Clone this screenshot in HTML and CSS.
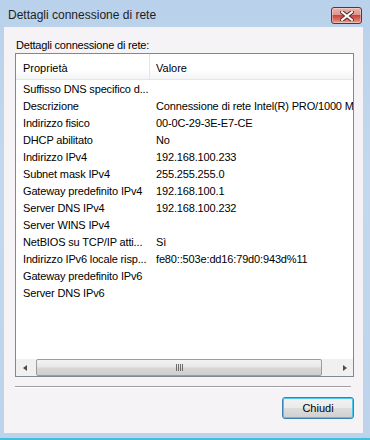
FILE: index.html
```html
<!DOCTYPE html>
<html lang="it">
<head>
    <meta charset="UTF-8">
    <title>Dettagli connessione di rete</title>
    <link rel="stylesheet" href="styles.css">
</head>
<body>
    <div class="window">
        <!-- title bar -->
        <div class="titlebar">
            <span class="title">Dettagli connessione di rete</span>
            <div class="close-btn">
                <svg width="14" height="10" viewBox="0 0 14 10">
                    <path d="M2 1 L12 9 M12 1 L2 9" stroke="#5a2a2a" stroke-width="4" stroke-linecap="square"/>
                    <path d="M2 1 L12 9 M12 1 L2 9" stroke="#ffffff" stroke-width="2" stroke-linecap="square"/>
                </svg>
            </div>
        </div>

        <div class="frame">
            <div class="client">
                <div class="label">Dettagli connessione di rete:</div>

                <div class="listbox">
                    <div class="list-header">
                        <div class="col col-prop">Proprietà</div>
                        <div class="col col-val">Valore</div>
                    </div>
                    <div class="rows">
                        <div class="row"><div class="col col-prop">Suffisso DNS specifico d...</div><div class="col col-val"></div></div>
                        <div class="row"><div class="col col-prop">Descrizione</div><div class="col col-val">Connessione di rete Intel(R) PRO/1000 MT</div></div>
                        <div class="row"><div class="col col-prop">Indirizzo fisico</div><div class="col col-val">00-0C-29-3E-E7-CE</div></div>
                        <div class="row"><div class="col col-prop">DHCP abilitato</div><div class="col col-val">No</div></div>
                        <div class="row"><div class="col col-prop">Indirizzo IPv4</div><div class="col col-val">192.168.100.233</div></div>
                        <div class="row"><div class="col col-prop">Subnet mask IPv4</div><div class="col col-val">255.255.255.0</div></div>
                        <div class="row"><div class="col col-prop">Gateway predefinito IPv4</div><div class="col col-val">192.168.100.1</div></div>
                        <div class="row"><div class="col col-prop">Server DNS IPv4</div><div class="col col-val">192.168.100.232</div></div>
                        <div class="row"><div class="col col-prop">Server WINS IPv4</div><div class="col col-val"></div></div>
                        <div class="row"><div class="col col-prop">NetBIOS su TCP/IP atti...</div><div class="col col-val">Sì</div></div>
                        <div class="row"><div class="col col-prop">Indirizzo IPv6 locale risp...</div><div class="col col-val">fe80::503e:dd16:79d0:943d%11</div></div>
                        <div class="row"><div class="col col-prop">Gateway predefinito IPv6</div><div class="col col-val"></div></div>
                        <div class="row"><div class="col col-prop">Server DNS IPv6</div><div class="col col-val"></div></div>
                    </div>

                    <!-- horizontal scrollbar -->
                    <div class="hscroll">
                        <div class="arrow-btn"><span class="tri tri-left"></span></div>
                        <div class="thumb"><span class="grip"></span></div>
                        <div class="track"></div>
                        <div class="arrow-btn"><span class="tri tri-right"></span></div>
                    </div>
                </div>

                <div class="separator"></div>

                <div class="buttons">
                    <button class="btn-close-dialog">Chiudi</button>
                </div>
            </div>
        </div>
        <div class="bottom-edge"></div>
    </div>
</body>
</html>
```

FILE: styles.css
```css
* {
    box-sizing: border-box;
}

body {
    margin: 0;
    width: 370px;
    height: 440px;
    overflow: hidden;
    font-family: "Liberation Sans", Arial, sans-serif;
    font-size: 11px;
    color: #000;
}

.window {
    width: 370px;
    height: 440px;
    background: linear-gradient(to bottom, #b9d1ea 0%, #c3d8ee 40%, #bcd3eb 100%);
    display: flex;
    flex-direction: column;
}

.titlebar {
    height: 27px;
    display: flex;
    align-items: flex-start;
    justify-content: space-between;
    padding: 0 8px 0 8px;
}

.title {
    font-size: 12px;
    line-height: 14px;
    margin-top: 8px;
    color: #1e1e1e;
}

.close-btn {
    width: 31px;
    height: 17px;
    margin-top: 7px;
    border: 1px solid #6e2c28;
    border-radius: 3px;
    background: linear-gradient(to bottom, #eab3aa 0%, #e0958b 45%, #c9463d 50%, #d86a5e 75%, #e8a096 100%);
    display: flex;
    align-items: center;
    justify-content: center;
    box-shadow: inset 0 0 0 1px rgba(255, 255, 255, 0.35);
}

.frame {
    flex: 1;
    padding: 0 7px 0 4px;
    display: flex;
}

.client {
    flex: 1;
    background-color: #f6f3f7;
    padding: 12px 0 0 11px;
    display: flex;
    flex-direction: column;
}

.label {
    line-height: 13px;
    margin-left: 1px;
    letter-spacing: -0.2px;
}

.listbox {
    margin-top: 1px;
    width: 339px;
    height: 324px;
    border: 1px solid #828790;
    background-color: #fff;
    display: flex;
    flex-direction: column;
    overflow: hidden;
}

.list-header {
    height: 26px;
    display: flex;
    background: linear-gradient(to bottom, #ffffff 0%, #ffffff 60%, #f3f4f6 100%);
    border-bottom: 1px solid #e5e5e5;
    flex-shrink: 0;
}

.list-header .col {
    padding-top: 8px;
    line-height: 13px;
}

.list-header .col-prop {
    border-right: 1px solid #e3e5e8;
}

.col {
    white-space: nowrap;
    overflow: hidden;
}

.col-prop {
    width: 134px;
    padding-left: 7px;
    flex-shrink: 0;
}

.col-val {
    flex: 1;
    padding-left: 6px;
}

.rows {
    flex: 1;
    padding-top: 1px;
    letter-spacing: -0.15px;
}

.row {
    height: 17px;
    line-height: 17px;
    display: flex;
}

.hscroll {
    height: 17px;
    display: flex;
    background-color: #f0f0f0;
    flex-shrink: 0;
}

.arrow-btn {
    width: 17px;
    display: flex;
    align-items: center;
    justify-content: center;
    background-color: #f0f0f0;
}

.tri {
    width: 0;
    height: 0;
    border-top: 3px solid transparent;
    border-bottom: 3px solid transparent;
}

.tri-left {
    border-right: 4px solid #4d4d4d;
}

.tri-right {
    border-left: 4px solid #4d4d4d;
}

.thumb {
    width: 286px;
    margin: 0 0 0 3px;
    border: 1px solid #9c9c9c;
    border-radius: 2px;
    background: linear-gradient(to bottom, #f3f3f3 0%, #e8e8e8 45%, #d6d6d6 55%, #cfcfcf 100%);
    display: flex;
    align-items: center;
    justify-content: center;
}

.grip {
    width: 7px;
    height: 7px;
    background: repeating-linear-gradient(to right, #6a6a6a 0, #6a6a6a 1px, transparent 1px, transparent 2px);
}

.track {
    flex: 1;
}

.separator {
    width: 336px;
    margin-top: 9px;
    border-top: 1px solid #a0a0a0;
    border-bottom: 1px solid #fff;
}

.buttons {
    display: flex;
    justify-content: flex-end;
    width: 339px;
    margin-top: 9px;
}

.btn-close-dialog {
    width: 72px;
    height: 22px;
    padding: 0;
    font-family: "Liberation Sans", Arial, sans-serif;
    font-size: 11px;
    color: #000;
    border: 1px solid #3c7fb1;
    border-radius: 3px;
    background: linear-gradient(to bottom, #f2f2f2 0%, #ebebeb 48%, #dddddd 52%, #cfcfcf 100%);
    box-shadow: inset 0 0 0 1px #4fc6f0;
}

.bottom-edge {
    height: 7px;
    border-bottom: 2px solid #3fc0e0;
}
```
